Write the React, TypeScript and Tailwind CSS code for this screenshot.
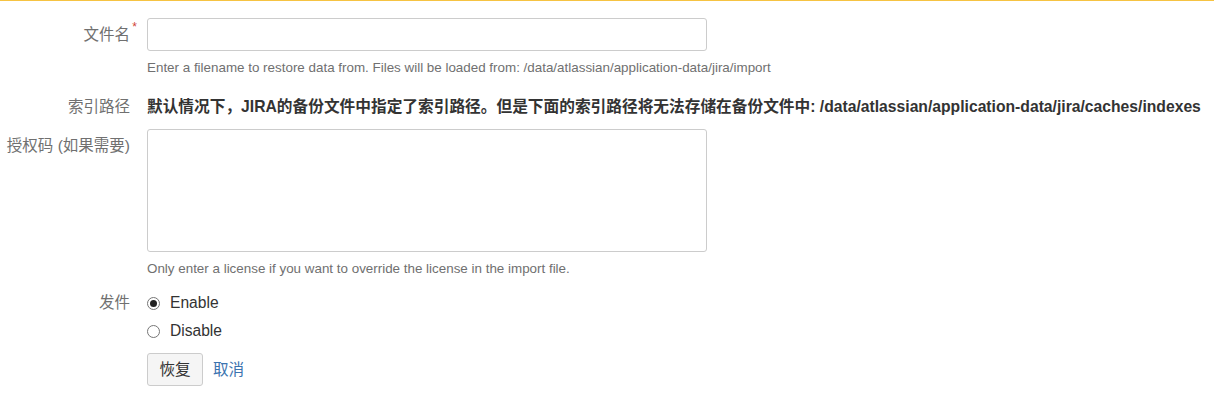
import React from "react";

const font = { fontFamily: '"Liberation Sans", Arial, "Noto Sans CJK SC", sans-serif' };

function Label({ children, required }: { children: React.ReactNode; required?: boolean }) {
  return (
    <div className="w-[130px] shrink-0 whitespace-nowrap text-right text-[15.5px] leading-[20px] text-[#707070]">
      <span className="relative">
        {children}
        {required && (
          <span className="absolute -right-[7px] -top-[5px] text-[12px] leading-none text-[#d04437]">*</span>
        )}
      </span>
    </div>
  );
}

function Radio({ checked }: { checked?: boolean }) {
  return (
    <span className="flex h-[13px] w-[13px] items-center justify-center rounded-full border border-[#767676] bg-white">
      {checked && <span className="h-[7px] w-[7px] rounded-full bg-[#222]" />}
    </span>
  );
}

export default function App() {
  return (
    <div className="min-h-[396px] w-[1214px] border-t border-[#f6c342] bg-white" style={font}>
      <div className="flex flex-col pt-[17px]">
        {/* filename */}
        <div className="flex gap-[17px]">
          <div className="pt-[7px]">
            <Label required>文件名</Label>
          </div>
          <div className="flex flex-col">
            <div className="h-[33px] w-[560px] rounded-[3px] border border-[#cccccc] bg-white" />
            <div className="mt-[9px] whitespace-nowrap text-[13.4px] leading-[16px] text-[#707070]">
              Enter a filename to restore data from. Files will be loaded from: /data/atlassian/application-data/jira/import
            </div>
          </div>
        </div>

        {/* index path */}
        <div className="mt-[21px] flex gap-[17px]">
          <Label>索引路径</Label>
          <div className="whitespace-nowrap text-[15.7px] font-bold leading-[20px] text-[#333333]">
            默认情况下，JIRA的备份文件中指定了索引路径。但是下面的索引路径将无法存储在备份文件中: /data/atlassian/application-data/jira/caches/indexes
          </div>
        </div>

        {/* license */}
        <div className="mt-[12px] flex gap-[17px]">
          <div className="pt-[7px]">
            <Label>授权码 (如果需要)</Label>
          </div>
          <div className="flex flex-col">
            <div className="h-[123px] w-[560px] rounded-[3px] border border-[#cccccc] bg-white" />
            <div className="mt-[9px] whitespace-nowrap text-[13.4px] leading-[16px] text-[#707070]">
              Only enter a license if you want to override the license in the import file.
            </div>
          </div>
        </div>

        {/* outgoing mail */}
        <div className="mt-[16px] flex gap-[17px]">
          <Label>发件</Label>
          <div className="flex flex-col gap-[8px] text-[15.6px] leading-[20px] text-[#333333]">
            <label className="flex items-center gap-[10px]">
              <Radio checked />
              <span>Enable</span>
            </label>
            <label className="flex items-center gap-[10px]">
              <Radio />
              <span>Disable</span>
            </label>
          </div>
        </div>

        {/* buttons */}
        <div className="mt-[12px] flex items-center gap-[10px] pl-[147px]">
          <button className="h-[33px] w-[56px] rounded-[3px] border border-[#cccccc] bg-[#f5f5f5] text-[15.6px] text-[#333333]">
            恢复
          </button>
          <a className="text-[15.6px] text-[#3b73af]">取消</a>
        </div>
      </div>
    </div>
  );
}
